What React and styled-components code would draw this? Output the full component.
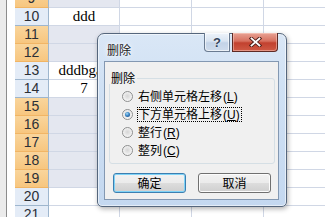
import React from 'react'
import styled, { createGlobalStyle } from 'styled-components'

const GlobalStyle = createGlobalStyle`
  html, body { margin: 0; padding: 0; background: #fff; overflow: hidden; }
  #root { width: 325px; height: 217px; }
`

const rows = [
  { n: 9, sel: true },
  { n: 10, text: 'ddd' },
  { n: 11, sel: true },
  { n: 12, sel: true },
  { n: 13, text: 'dddbgaa' },
  { n: 14, text: '7' },
  { n: 15, sel: true },
  { n: 16, sel: true },
  { n: 17, sel: true },
  { n: 18, sel: true },
  { n: 19, sel: true },
  { n: 20 },
  { n: 21 },
]

const options = [
  { label: '右侧单元格左移', key: 'L' },
  { label: '下方单元格上移', key: 'U', checked: true },
  { label: '整行', key: 'R' },
  { label: '整列', key: 'C' },
]

const App = () => {
  return (
    <>
      <GlobalStyle />
      <Screen>
        <Gutter />
        <Sheet>
          {rows.map(r => (
            <Row key={r.n}>
              <RowHeader $sel={r.sel}>{r.n}</RowHeader>
              <Cell $sel={r.sel}>{r.text}</Cell>
              <Cell />
              <Cell />
              <Cell />
            </Row>
          ))}
        </Sheet>

        <Dialog>
          <TitleBar>
            <Title>删除</Title>
            <CaptionButtons>
              <HelpButton>?</HelpButton>
              <CloseButton>
                <svg width="13" height="10" viewBox="0 0 13 10">
                  <path d="M2.5 1.5 L10.5 8.5 M10.5 1.5 L2.5 8.5" stroke="#4a1c17" strokeWidth="3.6" strokeLinecap="square" fill="none" />
                  <path d="M2.5 1.5 L10.5 8.5 M10.5 1.5 L2.5 8.5" stroke="#fff" strokeWidth="1.8" strokeLinecap="square" fill="none" />
                </svg>
              </CloseButton>
            </CaptionButtons>
          </TitleBar>
          <Client>
            <GroupBox>
              <Legend>删除</Legend>
              {options.map(o => (
                <RadioRow key={o.key}>
                  <Radio $checked={o.checked} />
                  <RadioLabel $focus={o.checked}>
                    {o.label}
                    <Mnemonic>(<u>{o.key}</u>)</Mnemonic>
                  </RadioLabel>
                </RadioRow>
              ))}
            </GroupBox>
            <ButtonRow>
              <Button $default>确定</Button>
              <Button>取消</Button>
            </ButtonRow>
          </Client>
        </Dialog>
      </Screen>
    </>
  )
}

export default App

const Screen = styled.div`
  position: relative;
  width: 325px;
  height: 217px;
  overflow: hidden;
  display: flex;
  background: #fff;
`

const Gutter = styled.div`
  width: 15px;
  flex: none;
  background: linear-gradient(to right, #ebebeb 0 6px, #8c8c8c 6px 7px, #fff 7px);
`

const Sheet = styled.div`
  display: flex;
  flex-direction: column;
  margin-top: -10px;
`

const Row = styled.div`
  display: grid;
  grid-template-columns: 34px 71px 72px 72px 72px;
  height: 18px;
`

const RowHeader = styled.div`
  box-sizing: border-box;
  border-right: 1px solid #9eb6ce;
  border-bottom: 1px solid ${p => (p.$sel ? '#f1b565' : '#9eb6ce')};
  background: ${p => (p.$sel ? 'linear-gradient(#f9d59c, #f7c67f)' : '#e4ecf7')};
  color: #2b2f36;
  font-family: "Liberation Sans", Arial, sans-serif;
  font-size: 14px;
  line-height: 17px;
  text-align: center;
`

const Cell = styled.div`
  box-sizing: border-box;
  border-right: 1px solid #d0d7e5;
  border-bottom: 1px solid #d0d7e5;
  background: ${p => (p.$sel ? '#e4e7f0' : '#fff')};
  display: flex;
  justify-content: center;
  align-items: center;
  white-space: nowrap;
  color: #000;
  font-family: "Liberation Serif", "Times New Roman", serif;
  font-size: 15px;
`

const Dialog = styled.div`
  position: absolute;
  left: 97px;
  top: 33px;
  width: 190px;
  height: 174px;
  box-sizing: border-box;
  border: 1px solid #55667c;
  border-radius: 7px 7px 5px 5px;
  background: linear-gradient(#dae7f6 0%, #d0e1f4 30%, #c4d8f0 100%);
  box-shadow: inset 0 0 0 1px rgba(255, 255, 255, 0.55), 1px 2px 5px rgba(0, 0, 0, 0.3);
  display: flex;
  flex-direction: column;
  padding: 0 7px 6px 6px;
  font-family: "Noto Sans CJK SC", "Liberation Sans", sans-serif;
  font-size: 12px;
  color: #000;
`

const TitleBar = styled.div`
  height: 27px;
  flex: none;
  display: flex;
  align-items: flex-start;
`

const Title = styled.div`
  padding: 9px 0 0 3px;
  line-height: 14px;
  color: #1b1b1b;
  text-shadow: 0 0 6px #fff, 0 0 3px #fff;
`

const CaptionButtons = styled.div`
  margin-left: auto;
  margin-top: -1px;
  margin-right: 1px;
  display: flex;
  gap: 2px;
`

const HelpButton = styled.div`
  width: 26px;
  height: 19px;
  box-sizing: border-box;
  border: 1px solid #6a7b91;
  border-top: none;
  border-radius: 0 0 0 4px;
  background: linear-gradient(#eef3fa 0%, #d9e4f1 45%, #c3d3e7 55%, #cfdcec 100%);
  box-shadow: inset 0 0 0 1px rgba(255, 255, 255, 0.6);
  display: flex;
  align-items: center;
  justify-content: center;
  font-family: "Liberation Sans", Arial, sans-serif;
  font-weight: bold;
  font-size: 13px;
  color: #34455c;
  text-shadow: 0 0 2px #fff;
`

const CloseButton = styled.div`
  width: 46px;
  height: 19px;
  box-sizing: border-box;
  border: 1px solid #5e2a24;
  border-top: none;
  border-radius: 0 0 4px 0;
  background: linear-gradient(#e8a395 0%, #d7705f 45%, #c2412f 55%, #cf5a45 100%);
  box-shadow: inset 0 0 0 1px rgba(255, 220, 210, 0.45);
  display: flex;
  align-items: center;
  justify-content: center;
`

const Client = styled.div`
  flex: 1;
  border: 1px solid #8398b2;
  background: #f0f0f0;
  display: flex;
  flex-direction: column;
`

const GroupBox = styled.div`
  position: relative;
  margin: 16px 3px 0 4px;
  padding: 8px 0 4px 12px;
  border: 1px solid #d5dfe5;
  border-radius: 3px;
`

const Legend = styled.div`
  position: absolute;
  top: -7px;
  left: -1px;
  padding: 0 2px;
  line-height: 12px;
  background: #f0f0f0;
`

const RadioRow = styled.div`
  height: 18px;
  display: flex;
  align-items: center;
`

const Radio = styled.span`
  width: 11px;
  height: 11px;
  box-sizing: border-box;
  border-radius: 50%;
  border: 1px solid #8e8f8f;
  background: radial-gradient(circle at 50% 45%, #d6d6d6 0, #e4e4e4 35%, #f8f8f8 75%, #fff 100%);
  display: flex;
  align-items: center;
  justify-content: center;
  margin-right: 4px;

  &::after {
    content: '';
    display: ${p => (p.$checked ? 'block' : 'none')};
    width: 5px;
    height: 5px;
    border-radius: 50%;
    background: radial-gradient(circle at 40% 35%, #a9dcf8 0, #3a86c6 45%, #123f78 100%);
  }
`

const RadioLabel = styled.span`
  border: 1px dotted ${p => (p.$focus ? '#000' : 'transparent')};
  padding: 0 1px 0 0;
  line-height: 12px;
  white-space: nowrap;
`

const Mnemonic = styled.span`
  font-family: "Liberation Sans", Arial, sans-serif;
  font-size: 12px;
  margin-left: 1px;
`

const ButtonRow = styled.div`
  display: flex;
  gap: 12px;
  margin-top: 9px;
  padding-left: 8px;
`

const Button = styled.div`
  width: 73px;
  height: 20px;
  box-sizing: border-box;
  border: 1px solid ${p => (p.$default ? '#3c7fb1' : '#707070')};
  border-radius: 3px;
  background: linear-gradient(#f2f2f2 0%, #ebebeb 50%, #dddddd 51%, #cfcfcf 100%);
  box-shadow: inset 0 0 0 1px ${p => (p.$default ? '#7fd3f7' : '#fcfcfc')};
  display: flex;
  align-items: center;
  justify-content: center;
  line-height: 12px;
`
